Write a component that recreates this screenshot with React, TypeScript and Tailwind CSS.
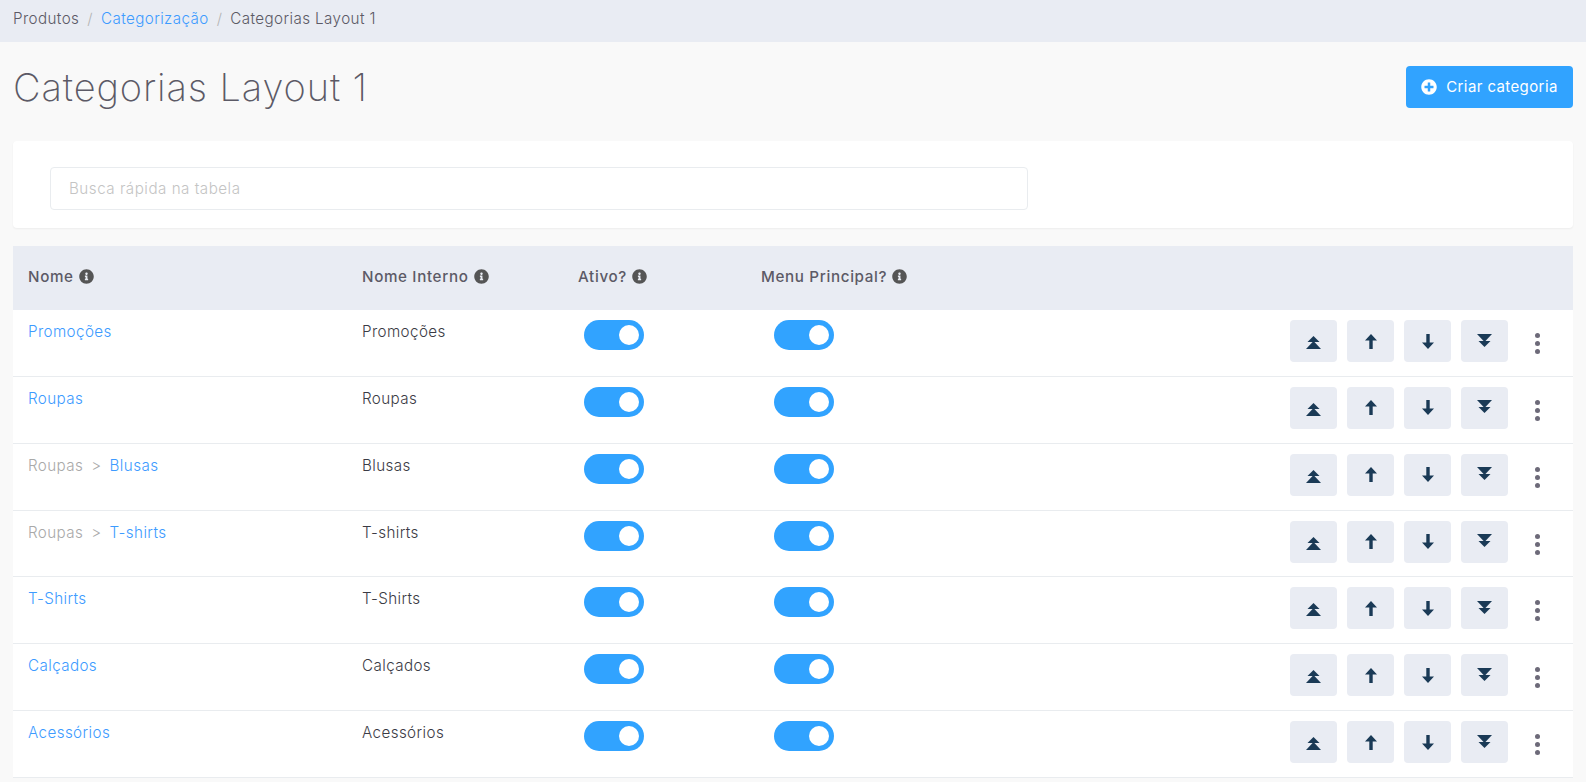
import { FaInfoCircle, FaPlusCircle } from "react-icons/fa";

type Category = { parent?: string; name: string };

const categories: Category[] = [
  { name: "Promoções" },
  { name: "Roupas" },
  { parent: "Roupas", name: "Blusas" },
  { parent: "Roupas", name: "T-shirts" },
  { name: "T-Shirts" },
  { name: "Calçados" },
  { name: "Acessórios" },
];

function HeaderCell({ label, className }: { label: string; className: string }) {
  return (
    <div className={`flex items-center gap-[5px] ${className}`}>
      <span>{label}</span>
      <FaInfoCircle className="size-[15px] text-[#555555]" />
    </div>
  );
}

function Toggle() {
  return (
    <span className="flex h-[30px] w-[60px] items-center justify-end rounded-full bg-[#31a3ff] pr-[5px]">
      <span className="size-5 rounded-full bg-white" />
    </span>
  );
}

function DoubleTriangle({ down }: { down?: boolean }) {
  return (
    <svg viewBox="0 0 15 13" className={`h-[13px] w-[15px] fill-[#1a3a56] ${down ? "mb-[2px] rotate-180" : "mt-[3px]"}`}>
      <path d="M7.5 0 L13.5 6 L1.5 6 Z" />
      <path d="M7.5 5 L15 13 L0 13 Z" />
    </svg>
  );
}

function Arrow({ down }: { down?: boolean }) {
  return (
    <svg viewBox="0 0 12 15" className={`h-[15px] w-3 fill-[#1a3a56] ${down ? "rotate-180" : ""}`}>
      <path d="M6 0 L12 6.5 L7.7 6.5 L7.7 15 L4.3 15 L4.3 6.5 L0 6.5 Z" />
    </svg>
  );
}

function MoveButton({ children }: { children: React.ReactNode }) {
  return (
    <button type="button" className="flex h-[42px] w-[47px] items-center justify-center rounded bg-[#e9ecf3]">
      {children}
    </button>
  );
}

function Row({ category }: { category: Category }) {
  return (
    <div className="flex h-[66.86px] border-b border-[#e9ecef] bg-white pl-[15px] pr-[24px] text-[15.2px] font-light tracking-[0.4px]">
      <div className="w-[334px] pt-[11px] leading-[22px]">
        {category.parent && (
          <span className="text-[#a9a9a9]">
            {category.parent}
            <span className="mx-2">&gt;</span>
          </span>
        )}
        <a className="text-[#3d9bff]">{category.name}</a>
      </div>
      <div className="w-[222px] pt-[11px] leading-[22px] text-[#3b3b45]">{category.name}</div>
      <div className="w-[190px] pt-[10px]"><Toggle /></div>
      <div className="pt-[10px]"><Toggle /></div>
      <div className="ml-auto flex items-start gap-[10px] pt-[10px]">
        <MoveButton><DoubleTriangle /></MoveButton>
        <MoveButton><Arrow /></MoveButton>
        <MoveButton><Arrow down /></MoveButton>
        <MoveButton><DoubleTriangle down /></MoveButton>
        <span className="ml-[7px] flex h-[42px] w-[24px] flex-col items-center gap-[3px] pt-[13px]">
          <span className="size-[5px] rounded-full bg-[#6d6a79]" />
          <span className="size-[5px] rounded-full bg-[#6d6a79]" />
          <span className="size-[5px] rounded-full bg-[#6d6a79]" />
        </span>
      </div>
    </div>
  );
}

export default function App() {
  return (
    <div className="min-h-[782px] overflow-hidden bg-[#f9f9f9] font-['Inter',sans-serif] text-[#5c5a66]">
      <nav className="flex h-[42px] items-center bg-[#e9ecf3] px-[13px] pb-[4px] text-[15.2px] font-light tracking-[0.4px]">
        <span>Produtos</span>
        <span className="mx-2 text-[#b4b4b4]">/</span>
        <a className="text-[#3d9bff]">Categorização</a>
        <span className="mx-2 text-[#b4b4b4]">/</span>
        <span>Categorias Layout 1</span>
      </nav>

      <div className="px-[13px]">
        <div className="flex h-[99px] items-start justify-between pt-[23px]">
          <h1 className="text-[38px] leading-[44px] font-extralight tracking-[0.9px]">Categorias Layout 1</h1>
          <button type="button" className="mt-px flex h-[42px] w-[167px] items-center justify-center gap-[9px] rounded bg-[#31a3ff] text-[15px] tracking-[0.4px] text-white">
            <FaPlusCircle className="size-4" />
            Criar categoria
          </button>
        </div>

        <div className="h-[87px] rounded bg-white pl-[37px] pt-[26px] shadow-[0_1px_2px_rgba(0,0,0,0.05)]">
          <input
            placeholder="Busca rápida na tabela"
            className="h-[43px] w-[978px] rounded border border-[#e9ecef] px-[18px] text-[15.2px] font-light tracking-[0.5px] outline-none placeholder:text-[#c4c4c4]"
          />
        </div>

        <div className="mt-[18px]">
          <div className="flex h-[64px] items-center bg-[#e9ecf3] pb-[2px] pl-[15px] text-[15.2px] font-medium tracking-[0.65px]">
            <HeaderCell label="Nome" className="w-[334px]" />
            <HeaderCell label="Nome Interno" className="w-[216px]" />
            <HeaderCell label="Ativo?" className="w-[183px]" />
            <HeaderCell label="Menu Principal?" className="" />
          </div>
          {categories.map((category, index) => (
            <Row key={index} category={category} />
          ))}
        </div>
      </div>
    </div>
  );
}
